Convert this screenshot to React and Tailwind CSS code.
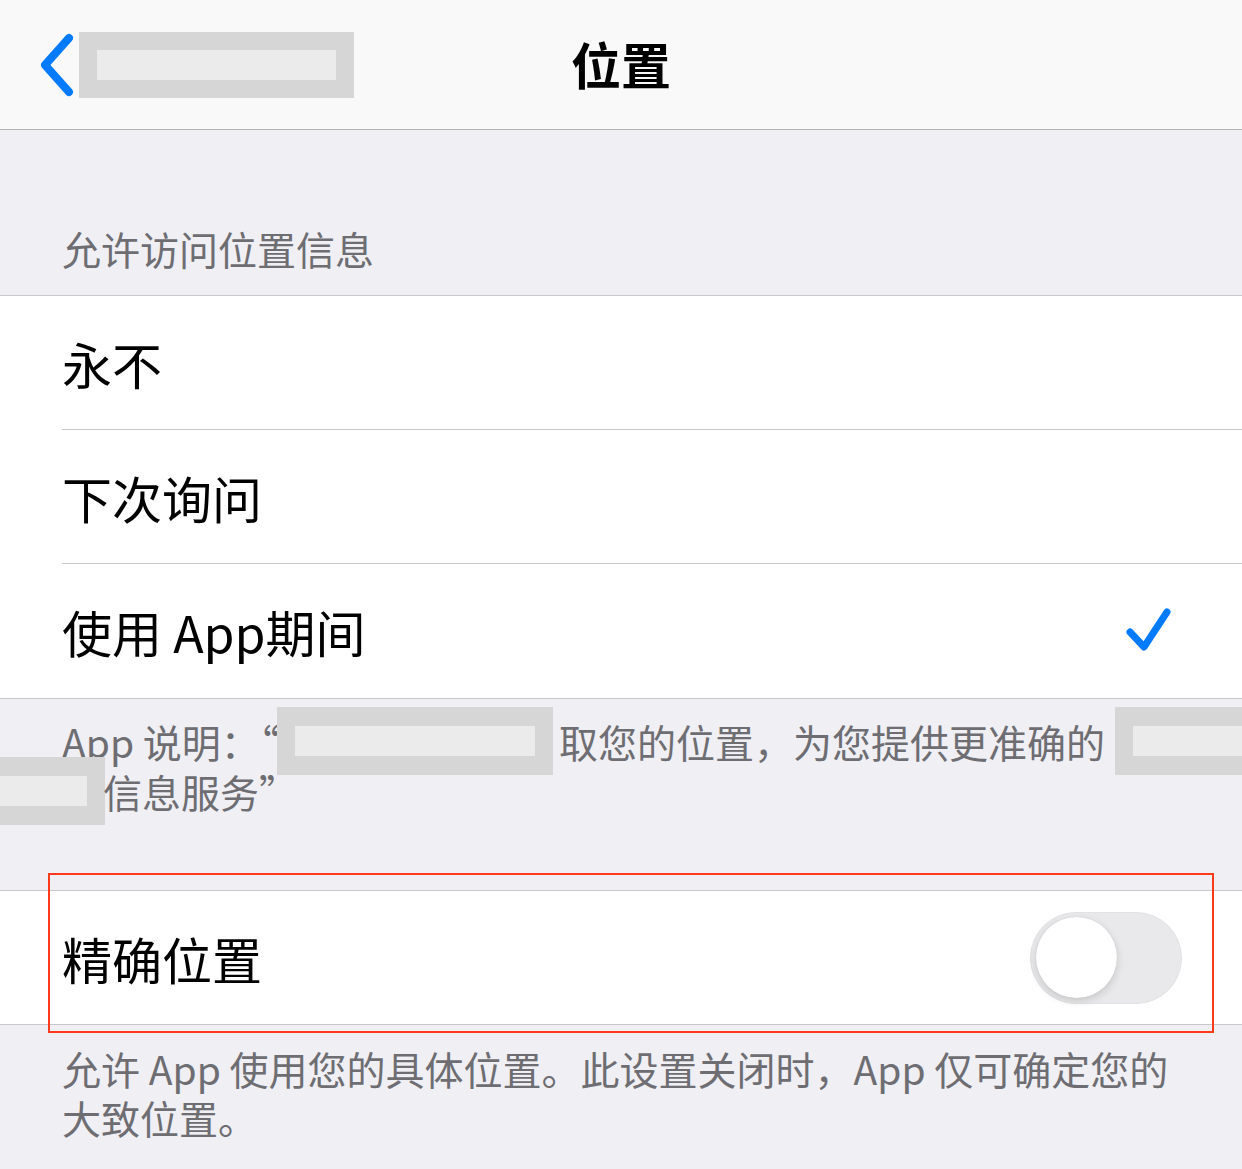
import React from "react";

const Redact = ({ className }) => (
  <span className={`inline-flex shrink-0 items-center bg-[#d6d6d6] ${className}`}>
    <span className="block h-[30px] w-full bg-[#ebebeb]" />
  </span>
);

const Row = ({ label, checked, last }) => (
  <div className="flex h-[134px] items-center pl-[62px]">
    <div
      className={`flex h-full flex-1 items-center pr-[74px] ${
        last ? "" : "border-b border-[#c8c7cc]"
      }`}
    >
      <span className="flex-1 text-[50px] leading-none text-black">{label}</span>
      {checked && (
        <svg width="50" height="50" viewBox="0 0 50 50" className="-mr-[4px]">
          <path
            d="M8 26 L22 41 L45 6"
            fill="none"
            stroke="#007aff"
            strokeWidth="7"
            strokeLinecap="round"
            strokeLinejoin="round"
          />
        </svg>
      )}
    </div>
  </div>
);

export default function App() {
  return (
    <div className="relative h-[1169px] w-[1242px] overflow-hidden bg-[#efeff4] font-['Noto_Sans_CJK_SC','Noto_Sans',sans-serif]">
      {/* nav bar */}
      <div className="grid h-[130px] grid-cols-[1fr_auto_1fr] items-center border-b border-[#b2b2b2] bg-[#f9f9f9]">
        <div className="flex items-center pl-[36px]">
          <svg width="40" height="66" viewBox="0 0 40 66">
            <path
              d="M33 6 L9 33 L33 60"
              fill="none"
              stroke="#007aff"
              strokeWidth="8"
              strokeLinecap="round"
              strokeLinejoin="round"
            />
          </svg>
          <Redact className="ml-[3px] h-[66px] w-[275px] px-[18px]" />
        </div>
        <span className="pb-[4px] text-[50px] font-semibold leading-none text-black">位置</span>
        <div />
      </div>

      {/* section header */}
      <div className="flex h-[165px] items-end pb-[22px] pl-[62px] text-[39px] leading-[50px] text-[#6d6d72]">
        允许访问位置信息
      </div>

      <div className="border-y border-[#c8c7cc] bg-white">
        <Row label="永不" />
        <Row label="下次询问" />
        <Row label="使用 App期间" checked last />
      </div>

      {/* app explanation */}
      <div className="h-[191px] overflow-hidden pt-[17px] text-[39px] leading-[50px] text-[#6d6d72]">
        <div className="flex h-[50px] items-center whitespace-nowrap pl-[62px]">
          <span className="w-[215px] shrink-0">App 说明：“</span>
          <Redact className="-my-[9px] h-[68px] w-[276px] px-[18px]" />
          <span className="ml-[6px] shrink-0">取您的位置，为您提供更准确的</span>
          <Redact className="-my-[9px] ml-[10px] h-[68px] w-[160px] pl-[18px]" />
        </div>
        <div className="flex h-[50px] items-center whitespace-nowrap">
          <Redact className="-my-[9px] h-[68px] w-[105px] pr-[18px]" />
          <span className="ml-[-2px]">信息服务”</span>
        </div>
      </div>

      {/* precise location */}
      <div className="border-y border-[#c8c7cc] bg-white">
        <div className="flex h-[133px] items-center pl-[62px] pr-[60px]">
          <span className="flex-1 text-[50px] leading-none text-black">精确位置</span>
          <div className="flex h-[92px] w-[152px] items-center rounded-full border border-[#e2e2e4] bg-[#e9e9eb] pl-[5px]">
            <div className="h-[81px] w-[81px] rounded-full bg-white shadow-[0_3px_8px_rgba(0,0,0,0.15),0_0_1px_rgba(0,0,0,0.12)]" />
          </div>
        </div>
      </div>

      <div className="pl-[62px] pt-[19px] text-[39px] leading-[49px] text-[#6d6d72]">
        <div className="whitespace-nowrap">允许 App 使用您的具体位置。此设置关闭时，App 仅可确定您的</div>
        <div>大致位置。</div>
      </div>

      {/* red annotation box */}
      <div className="pointer-events-none absolute left-[48px] top-[873px] h-[160px] w-[1166px] border-2 border-[#ff3a1a]" />
    </div>
  );
}
